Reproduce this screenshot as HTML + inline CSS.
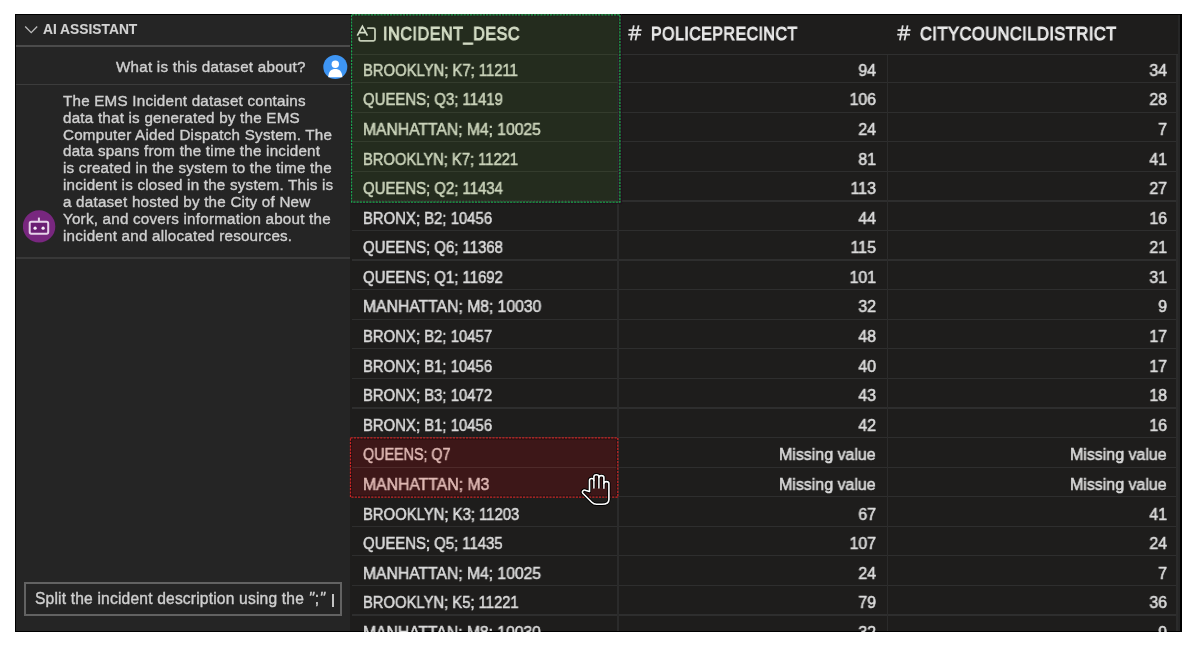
<!DOCTYPE html>
<html><head><meta charset="utf-8">
<style>
html,body{margin:0;padding:0;background:#ffffff;width:1200px;height:649px;overflow:hidden;position:relative;font-family:"Liberation Sans",sans-serif;}
.t{position:absolute;white-space:nowrap;line-height:20px;will-change:transform;-webkit-text-stroke:0.38px currentColor;}
.r{position:absolute;}
</style></head><body>
<div class="r" style="left:14.5px;top:14px;width:1167.5px;height:618px;background:#000;"></div>
<div class="r" style="left:350px;top:15px;width:830px;height:616px;background:#1e1d1c;overflow:hidden;"></div>
<div class="r" style="left:15.8px;top:15px;width:334.2px;height:616px;background:#252525;"></div>
<div class="r" style="left:15.8px;top:45px;width:334.2px;height:1.5px;background:#4b4b4b;"></div>
<div class="r" style="left:15.8px;top:83.8px;width:334.2px;height:1.5px;background:#3c3c3c;"></div>
<div class="r" style="left:15.8px;top:257.2px;width:334.2px;height:1.5px;background:#383838;"></div>
<svg class="r" style="left:24px;top:25px" width="15" height="10" viewBox="0 0 15 10"><path d="M1.2 1.5 L7.2 7.6 L13.2 1.5" fill="none" stroke="#bcbcbc" stroke-width="1.35"/></svg>
<div class="t" style="left:43.30px;top:19.72px;font-size:13.8px;color:#d2d2d2;font-weight:700;letter-spacing:0px;-webkit-text-stroke:0.1px currentColor;">AI ASSISTANT</div>
<div class="t" style="right:894.20px;top:57.33px;font-size:15.2px;color:#cfcfcf;font-weight:400;letter-spacing:0.24px;">What is this dataset about?</div>
<svg class="r" style="left:323px;top:55px" width="25" height="25" viewBox="0 0 25 25"><circle cx="12.3" cy="12" r="12" fill="#3e95f4"/><circle cx="12.3" cy="9.3" r="3.7" fill="#fff"/><path d="M5.2 22.3 C5.5 16 8.3 13.9 12.3 13.9 C16.3 13.9 19.1 16 19.4 22.3 Z" fill="#fff"/></svg>
<div class="t" style="left:63.30px;top:90.73px;font-size:15.2px;color:#cfcfcf;font-weight:400;letter-spacing:0.22px;">The EMS Incident dataset contains</div>
<div class="t" style="left:63.30px;top:107.63px;font-size:15.2px;color:#cfcfcf;font-weight:400;letter-spacing:0.22px;">data that is generated by the EMS</div>
<div class="t" style="left:63.30px;top:124.53px;font-size:15.2px;color:#cfcfcf;font-weight:400;letter-spacing:0.22px;">Computer Aided Dispatch System. The</div>
<div class="t" style="left:63.30px;top:141.43px;font-size:15.2px;color:#cfcfcf;font-weight:400;letter-spacing:0.22px;">data spans from the time the incident</div>
<div class="t" style="left:63.30px;top:158.33px;font-size:15.2px;color:#cfcfcf;font-weight:400;letter-spacing:0.22px;">is created in the system to the time the</div>
<div class="t" style="left:63.30px;top:175.23px;font-size:15.2px;color:#cfcfcf;font-weight:400;letter-spacing:0.22px;">incident is closed in the system. This is</div>
<div class="t" style="left:63.30px;top:192.13px;font-size:15.2px;color:#cfcfcf;font-weight:400;letter-spacing:0.22px;">a dataset hosted by the City of New</div>
<div class="t" style="left:63.30px;top:209.03px;font-size:15.2px;color:#cfcfcf;font-weight:400;letter-spacing:0.22px;">York, and covers information about the</div>
<div class="t" style="left:63.30px;top:225.93px;font-size:15.2px;color:#cfcfcf;font-weight:400;letter-spacing:0.22px;">incident and allocated resources.</div>
<svg class="r" style="left:23px;top:210px" width="33" height="33" viewBox="0 0 33 33"><circle cx="16.1" cy="16.4" r="16.2" fill="#78277f"/><rect x="6.7" y="11.85" width="18.5" height="11.85" rx="1.6" fill="#6a1f73" stroke="#e6d3ea" stroke-width="2"/><line x1="15.9" y1="7.6" x2="15.9" y2="11.85" stroke="#e6d3ea" stroke-width="2"/><circle cx="12.1" cy="18.2" r="1.6" fill="#f4ecf6"/><circle cx="20.1" cy="18.2" r="1.6" fill="#f4ecf6"/></svg>
<div class="r" style="left:24px;top:582px;width:314px;height:30px;border:2px solid #626262;background:#242424;"></div>
<div class="t" style="left:35.00px;top:589.19px;font-size:15.6px;color:#cfcfcf;font-weight:400;letter-spacing:0.18px;">Split the incident description using the <span style="font-style:italic;letter-spacing:0.6px">"</span><span style="letter-spacing:0.6px">;</span><span style="font-style:italic">"</span></div>
<div class="r" style="left:331.5px;top:594px;width:2px;height:12.5px;background:#c4c4c4;"></div>
<div class="r" style="left:0;top:0;width:1200px;height:632px;overflow:hidden">
<div class="r" style="left:352px;top:14px;width:268px;height:188px;background:#242c1e;"></div>
<div class="r" style="left:350px;top:437.5px;width:268px;height:59.80000000000001px;background:#3d1718;"></div>
<div class="r" style="left:1177.5px;top:15px;width:2.5px;height:616px;background:#262626;"></div>
<div class="r" style="left:352px;top:54.3px;width:826px;height:1.2px;background:#2f2f2f;"></div>
<div class="r" style="left:352px;top:82.00px;width:826px;height:1.2px;background:#2e2e2e;"></div>
<div class="r" style="left:352px;top:111.58px;width:826px;height:1.2px;background:#2e2e2e;"></div>
<div class="r" style="left:352px;top:141.16px;width:826px;height:1.2px;background:#2e2e2e;"></div>
<div class="r" style="left:352px;top:170.74px;width:826px;height:1.2px;background:#2e2e2e;"></div>
<div class="r" style="left:352px;top:200.32px;width:826px;height:1.2px;background:#2e2e2e;"></div>
<div class="r" style="left:352px;top:229.90px;width:826px;height:1.2px;background:#2e2e2e;"></div>
<div class="r" style="left:352px;top:259.48px;width:826px;height:1.2px;background:#2e2e2e;"></div>
<div class="r" style="left:352px;top:289.06px;width:826px;height:1.2px;background:#2e2e2e;"></div>
<div class="r" style="left:352px;top:318.64px;width:826px;height:1.2px;background:#2e2e2e;"></div>
<div class="r" style="left:352px;top:348.22px;width:826px;height:1.2px;background:#2e2e2e;"></div>
<div class="r" style="left:352px;top:377.80px;width:826px;height:1.2px;background:#2e2e2e;"></div>
<div class="r" style="left:352px;top:407.38px;width:826px;height:1.2px;background:#2e2e2e;"></div>
<div class="r" style="left:352px;top:436.96px;width:826px;height:1.2px;background:#2e2e2e;"></div>
<div class="r" style="left:352px;top:466.54px;width:826px;height:1.2px;background:#2e2e2e;"></div>
<div class="r" style="left:352px;top:496.12px;width:826px;height:1.2px;background:#2e2e2e;"></div>
<div class="r" style="left:352px;top:525.70px;width:826px;height:1.2px;background:#2e2e2e;"></div>
<div class="r" style="left:352px;top:555.28px;width:826px;height:1.2px;background:#2e2e2e;"></div>
<div class="r" style="left:352px;top:584.86px;width:826px;height:1.2px;background:#2e2e2e;"></div>
<div class="r" style="left:352px;top:614.44px;width:826px;height:1.2px;background:#2e2e2e;"></div>
<div class="r" style="left:617.40px;top:55px;width:1.2px;height:576px;background:#2b2b2b;"></div>
<div class="r" style="left:886.90px;top:55px;width:1.2px;height:576px;background:#2b2b2b;"></div>
<div class="r" style="left:1176.40px;top:55px;width:1.2px;height:576px;background:#2b2b2b;"></div>
<div class="r" style="left:352px;top:54.30px;width:267px;height:1.2px;background:#343c2d;"></div>
<div class="r" style="left:352px;top:82.00px;width:267px;height:1.2px;background:#343c2d;"></div>
<div class="r" style="left:352px;top:111.58px;width:267px;height:1.2px;background:#343c2d;"></div>
<div class="r" style="left:352px;top:141.16px;width:267px;height:1.2px;background:#343c2d;"></div>
<div class="r" style="left:352px;top:170.74px;width:267px;height:1.2px;background:#343c2d;"></div>
<div class="r" style="left:352px;top:200.32px;width:267px;height:1.2px;background:#343c2d;"></div>
<div class="r" style="left:351px;top:466.5px;width:266px;height:1.2px;background:#4e2a2a;"></div>
<svg class="r" style="left:355px;top:22px" width="24" height="22" viewBox="0 0 24 22"><path d="M2.3 13.7 L7.4 4.3 L12.4 13.7 M4.2 10.6 L10.6 10.6" fill="none" stroke="#d3dcc6" stroke-width="1.7"/><path d="M12.2 6.2 L18.5 6.2 Q20 6.2 20 7.7 L20 17.3 Q20 18.8 18.5 18.8 L5.7 18.8 Q4.2 18.8 4.2 17.3 L4.2 15.2" fill="none" stroke="#c4cdb6" stroke-width="1.8"/></svg>
<div class="t" style="left:383.20px;top:23.92px;font-size:19px;color:#d2dbc4;font-weight:400;letter-spacing:0.6px;transform:scaleX(0.8523);transform-origin:left center;-webkit-text-stroke:1.0px currentColor;">INCIDENT_DESC</div>
<svg class="r" style="left:624px;top:22px" width="22" height="22" viewBox="0 0 22 22"><path d="M9.8 3.4 L6.9 18.4 M14.6 3.4 L11.5 18.4 M4.6 8.1 L17.5 8.1 M4.2 12.7 L17 12.7" fill="none" stroke="#dedede" stroke-width="1.8"/></svg>
<div class="t" style="left:651.30px;top:23.92px;font-size:19px;color:#e8e8e8;font-weight:400;letter-spacing:0.6px;transform:scaleX(0.8369);transform-origin:left center;-webkit-text-stroke:1.0px currentColor;">POLICEPRECINCT</div>
<svg class="r" style="left:893px;top:22px" width="22" height="22" viewBox="0 0 22 22"><path d="M9.8 3.4 L6.9 18.4 M14.6 3.4 L11.5 18.4 M4.6 8.1 L17.5 8.1 M4.2 12.7 L17 12.7" fill="none" stroke="#dedede" stroke-width="1.8"/></svg>
<div class="t" style="left:919.60px;top:23.92px;font-size:19px;color:#e8e8e8;font-weight:400;letter-spacing:0.6px;transform:scaleX(0.8637);transform-origin:left center;-webkit-text-stroke:1.0px currentColor;">CITYCOUNCILDISTRICT</div>
<div class="t" style="left:362.50px;top:59.85px;font-size:16.3px;color:#cad3ba;font-weight:400;letter-spacing:0px;transform:scaleX(0.9103);transform-origin:left center;-webkit-text-stroke:0.55px currentColor;">BROOKLYN; K7; 11211</div>
<div class="t" style="right:324.00px;top:59.85px;font-size:16.3px;color:#dadada;font-weight:400;letter-spacing:0px;transform:scaleX(0.98);transform-origin:right center;-webkit-text-stroke:0.55px currentColor;">94</div>
<div class="t" style="right:33.00px;top:59.85px;font-size:16.3px;color:#dadada;font-weight:400;letter-spacing:0px;transform:scaleX(0.98);transform-origin:right center;-webkit-text-stroke:0.55px currentColor;">34</div>
<div class="t" style="left:362.50px;top:89.43px;font-size:16.3px;color:#cad3ba;font-weight:400;letter-spacing:0px;transform:scaleX(0.9167);transform-origin:left center;-webkit-text-stroke:0.55px currentColor;">QUEENS; Q3; 11419</div>
<div class="t" style="right:324.00px;top:89.43px;font-size:16.3px;color:#dadada;font-weight:400;letter-spacing:0px;transform:scaleX(0.98);transform-origin:right center;-webkit-text-stroke:0.55px currentColor;">106</div>
<div class="t" style="right:33.00px;top:89.43px;font-size:16.3px;color:#dadada;font-weight:400;letter-spacing:0px;transform:scaleX(0.98);transform-origin:right center;-webkit-text-stroke:0.55px currentColor;">28</div>
<div class="t" style="left:362.50px;top:119.01px;font-size:16.3px;color:#cad3ba;font-weight:400;letter-spacing:0px;transform:scaleX(0.9621);transform-origin:left center;-webkit-text-stroke:0.55px currentColor;">MANHATTAN; M4; 10025</div>
<div class="t" style="right:324.00px;top:119.01px;font-size:16.3px;color:#dadada;font-weight:400;letter-spacing:0px;transform:scaleX(0.98);transform-origin:right center;-webkit-text-stroke:0.55px currentColor;">24</div>
<div class="t" style="right:33.00px;top:119.01px;font-size:16.3px;color:#dadada;font-weight:400;letter-spacing:0px;transform:scaleX(0.98);transform-origin:right center;-webkit-text-stroke:0.55px currentColor;">7</div>
<div class="t" style="left:362.50px;top:148.59px;font-size:16.3px;color:#cad3ba;font-weight:400;letter-spacing:0px;transform:scaleX(0.905);transform-origin:left center;-webkit-text-stroke:0.55px currentColor;">BROOKLYN; K7; 11221</div>
<div class="t" style="right:324.00px;top:148.59px;font-size:16.3px;color:#dadada;font-weight:400;letter-spacing:0px;transform:scaleX(0.98);transform-origin:right center;-webkit-text-stroke:0.55px currentColor;">81</div>
<div class="t" style="right:33.00px;top:148.59px;font-size:16.3px;color:#dadada;font-weight:400;letter-spacing:0px;transform:scaleX(0.98);transform-origin:right center;-webkit-text-stroke:0.55px currentColor;">41</div>
<div class="t" style="left:362.50px;top:178.17px;font-size:16.3px;color:#cad3ba;font-weight:400;letter-spacing:0px;transform:scaleX(0.9167);transform-origin:left center;-webkit-text-stroke:0.55px currentColor;">QUEENS; Q2; 11434</div>
<div class="t" style="right:324.00px;top:178.17px;font-size:16.3px;color:#dadada;font-weight:400;letter-spacing:0px;transform:scaleX(0.98);transform-origin:right center;-webkit-text-stroke:0.55px currentColor;">113</div>
<div class="t" style="right:33.00px;top:178.17px;font-size:16.3px;color:#dadada;font-weight:400;letter-spacing:0px;transform:scaleX(0.98);transform-origin:right center;-webkit-text-stroke:0.55px currentColor;">27</div>
<div class="t" style="left:362.50px;top:207.75px;font-size:16.3px;color:#dadada;font-weight:400;letter-spacing:0px;transform:scaleX(0.9138);transform-origin:left center;-webkit-text-stroke:0.55px currentColor;">BRONX; B2; 10456</div>
<div class="t" style="right:324.00px;top:207.75px;font-size:16.3px;color:#dadada;font-weight:400;letter-spacing:0px;transform:scaleX(0.98);transform-origin:right center;-webkit-text-stroke:0.55px currentColor;">44</div>
<div class="t" style="right:33.00px;top:207.75px;font-size:16.3px;color:#dadada;font-weight:400;letter-spacing:0px;transform:scaleX(0.98);transform-origin:right center;-webkit-text-stroke:0.55px currentColor;">16</div>
<div class="t" style="left:362.50px;top:237.33px;font-size:16.3px;color:#dadada;font-weight:400;letter-spacing:0px;transform:scaleX(0.9167);transform-origin:left center;-webkit-text-stroke:0.55px currentColor;">QUEENS; Q6; 11368</div>
<div class="t" style="right:324.00px;top:237.33px;font-size:16.3px;color:#dadada;font-weight:400;letter-spacing:0px;transform:scaleX(0.98);transform-origin:right center;-webkit-text-stroke:0.55px currentColor;">115</div>
<div class="t" style="right:33.00px;top:237.33px;font-size:16.3px;color:#dadada;font-weight:400;letter-spacing:0px;transform:scaleX(0.98);transform-origin:right center;-webkit-text-stroke:0.55px currentColor;">21</div>
<div class="t" style="left:362.50px;top:266.91px;font-size:16.3px;color:#dadada;font-weight:400;letter-spacing:0px;transform:scaleX(0.9167);transform-origin:left center;-webkit-text-stroke:0.55px currentColor;">QUEENS; Q1; 11692</div>
<div class="t" style="right:324.00px;top:266.91px;font-size:16.3px;color:#dadada;font-weight:400;letter-spacing:0px;transform:scaleX(0.98);transform-origin:right center;-webkit-text-stroke:0.55px currentColor;">101</div>
<div class="t" style="right:33.00px;top:266.91px;font-size:16.3px;color:#dadada;font-weight:400;letter-spacing:0px;transform:scaleX(0.98);transform-origin:right center;-webkit-text-stroke:0.55px currentColor;">31</div>
<div class="t" style="left:362.50px;top:296.49px;font-size:16.3px;color:#dadada;font-weight:400;letter-spacing:0px;transform:scaleX(0.9648);transform-origin:left center;-webkit-text-stroke:0.55px currentColor;">MANHATTAN; M8; 10030</div>
<div class="t" style="right:324.00px;top:296.49px;font-size:16.3px;color:#dadada;font-weight:400;letter-spacing:0px;transform:scaleX(0.98);transform-origin:right center;-webkit-text-stroke:0.55px currentColor;">32</div>
<div class="t" style="right:33.00px;top:296.49px;font-size:16.3px;color:#dadada;font-weight:400;letter-spacing:0px;transform:scaleX(0.98);transform-origin:right center;-webkit-text-stroke:0.55px currentColor;">9</div>
<div class="t" style="left:362.50px;top:326.07px;font-size:16.3px;color:#dadada;font-weight:400;letter-spacing:0px;transform:scaleX(0.9138);transform-origin:left center;-webkit-text-stroke:0.55px currentColor;">BRONX; B2; 10457</div>
<div class="t" style="right:324.00px;top:326.07px;font-size:16.3px;color:#dadada;font-weight:400;letter-spacing:0px;transform:scaleX(0.98);transform-origin:right center;-webkit-text-stroke:0.55px currentColor;">48</div>
<div class="t" style="right:33.00px;top:326.07px;font-size:16.3px;color:#dadada;font-weight:400;letter-spacing:0px;transform:scaleX(0.98);transform-origin:right center;-webkit-text-stroke:0.55px currentColor;">17</div>
<div class="t" style="left:362.50px;top:355.65px;font-size:16.3px;color:#dadada;font-weight:400;letter-spacing:0px;transform:scaleX(0.9138);transform-origin:left center;-webkit-text-stroke:0.55px currentColor;">BRONX; B1; 10456</div>
<div class="t" style="right:324.00px;top:355.65px;font-size:16.3px;color:#dadada;font-weight:400;letter-spacing:0px;transform:scaleX(0.98);transform-origin:right center;-webkit-text-stroke:0.55px currentColor;">40</div>
<div class="t" style="right:33.00px;top:355.65px;font-size:16.3px;color:#dadada;font-weight:400;letter-spacing:0px;transform:scaleX(0.98);transform-origin:right center;-webkit-text-stroke:0.55px currentColor;">17</div>
<div class="t" style="left:362.50px;top:385.23px;font-size:16.3px;color:#dadada;font-weight:400;letter-spacing:0px;transform:scaleX(0.9138);transform-origin:left center;-webkit-text-stroke:0.55px currentColor;">BRONX; B3; 10472</div>
<div class="t" style="right:324.00px;top:385.23px;font-size:16.3px;color:#dadada;font-weight:400;letter-spacing:0px;transform:scaleX(0.98);transform-origin:right center;-webkit-text-stroke:0.55px currentColor;">43</div>
<div class="t" style="right:33.00px;top:385.23px;font-size:16.3px;color:#dadada;font-weight:400;letter-spacing:0px;transform:scaleX(0.98);transform-origin:right center;-webkit-text-stroke:0.55px currentColor;">18</div>
<div class="t" style="left:362.50px;top:414.81px;font-size:16.3px;color:#dadada;font-weight:400;letter-spacing:0px;transform:scaleX(0.9138);transform-origin:left center;-webkit-text-stroke:0.55px currentColor;">BRONX; B1; 10456</div>
<div class="t" style="right:324.00px;top:414.81px;font-size:16.3px;color:#dadada;font-weight:400;letter-spacing:0px;transform:scaleX(0.98);transform-origin:right center;-webkit-text-stroke:0.55px currentColor;">42</div>
<div class="t" style="right:33.00px;top:414.81px;font-size:16.3px;color:#dadada;font-weight:400;letter-spacing:0px;transform:scaleX(0.98);transform-origin:right center;-webkit-text-stroke:0.55px currentColor;">16</div>
<div class="t" style="left:362.50px;top:444.39px;font-size:16.3px;color:#dfb9b4;font-weight:400;letter-spacing:0px;transform:scaleX(0.8794);transform-origin:left center;-webkit-text-stroke:0.55px currentColor;">QUEENS; Q7</div>
<div class="t" style="right:324.00px;top:444.39px;font-size:16.3px;color:#dadada;font-weight:400;letter-spacing:0px;transform:scaleX(0.98);transform-origin:right center;-webkit-text-stroke:0.55px currentColor;">Missing value</div>
<div class="t" style="right:33.00px;top:444.39px;font-size:16.3px;color:#dadada;font-weight:400;letter-spacing:0px;transform:scaleX(0.98);transform-origin:right center;-webkit-text-stroke:0.55px currentColor;">Missing value</div>
<div class="t" style="left:362.50px;top:473.97px;font-size:16.3px;color:#dfb9b4;font-weight:400;letter-spacing:0px;transform:scaleX(0.9674);transform-origin:left center;-webkit-text-stroke:0.55px currentColor;">MANHATTAN; M3</div>
<div class="t" style="right:324.00px;top:473.97px;font-size:16.3px;color:#dadada;font-weight:400;letter-spacing:0px;transform:scaleX(0.98);transform-origin:right center;-webkit-text-stroke:0.55px currentColor;">Missing value</div>
<div class="t" style="right:33.00px;top:473.97px;font-size:16.3px;color:#dadada;font-weight:400;letter-spacing:0px;transform:scaleX(0.98);transform-origin:right center;-webkit-text-stroke:0.55px currentColor;">Missing value</div>
<div class="t" style="left:362.50px;top:503.55px;font-size:16.3px;color:#dadada;font-weight:400;letter-spacing:0px;transform:scaleX(0.912);transform-origin:left center;-webkit-text-stroke:0.55px currentColor;">BROOKLYN; K3; 11203</div>
<div class="t" style="right:324.00px;top:503.55px;font-size:16.3px;color:#dadada;font-weight:400;letter-spacing:0px;transform:scaleX(0.98);transform-origin:right center;-webkit-text-stroke:0.55px currentColor;">67</div>
<div class="t" style="right:33.00px;top:503.55px;font-size:16.3px;color:#dadada;font-weight:400;letter-spacing:0px;transform:scaleX(0.98);transform-origin:right center;-webkit-text-stroke:0.55px currentColor;">41</div>
<div class="t" style="left:362.50px;top:533.13px;font-size:16.3px;color:#dadada;font-weight:400;letter-spacing:0px;transform:scaleX(0.9148);transform-origin:left center;-webkit-text-stroke:0.55px currentColor;">QUEENS; Q5; 11435</div>
<div class="t" style="right:324.00px;top:533.13px;font-size:16.3px;color:#dadada;font-weight:400;letter-spacing:0px;transform:scaleX(0.98);transform-origin:right center;-webkit-text-stroke:0.55px currentColor;">107</div>
<div class="t" style="right:33.00px;top:533.13px;font-size:16.3px;color:#dadada;font-weight:400;letter-spacing:0px;transform:scaleX(0.98);transform-origin:right center;-webkit-text-stroke:0.55px currentColor;">24</div>
<div class="t" style="left:362.50px;top:562.71px;font-size:16.3px;color:#dadada;font-weight:400;letter-spacing:0px;transform:scaleX(0.9631);transform-origin:left center;-webkit-text-stroke:0.55px currentColor;">MANHATTAN; M4; 10025</div>
<div class="t" style="right:324.00px;top:562.71px;font-size:16.3px;color:#dadada;font-weight:400;letter-spacing:0px;transform:scaleX(0.98);transform-origin:right center;-webkit-text-stroke:0.55px currentColor;">24</div>
<div class="t" style="right:33.00px;top:562.71px;font-size:16.3px;color:#dadada;font-weight:400;letter-spacing:0px;transform:scaleX(0.98);transform-origin:right center;-webkit-text-stroke:0.55px currentColor;">7</div>
<div class="t" style="left:362.50px;top:592.29px;font-size:16.3px;color:#dadada;font-weight:400;letter-spacing:0px;transform:scaleX(0.9085);transform-origin:left center;-webkit-text-stroke:0.55px currentColor;">BROOKLYN; K5; 11221</div>
<div class="t" style="right:324.00px;top:592.29px;font-size:16.3px;color:#dadada;font-weight:400;letter-spacing:0px;transform:scaleX(0.98);transform-origin:right center;-webkit-text-stroke:0.55px currentColor;">79</div>
<div class="t" style="right:33.00px;top:592.29px;font-size:16.3px;color:#dadada;font-weight:400;letter-spacing:0px;transform:scaleX(0.98);transform-origin:right center;-webkit-text-stroke:0.55px currentColor;">36</div>
<div class="t" style="left:362.50px;top:621.87px;font-size:16.3px;color:#dadada;font-weight:400;letter-spacing:0px;transform:scaleX(0.9621);transform-origin:left center;-webkit-text-stroke:0.55px currentColor;">MANHATTAN; M8; 10030</div>
<div class="t" style="right:324.00px;top:621.87px;font-size:16.3px;color:#dadada;font-weight:400;letter-spacing:0px;transform:scaleX(0.98);transform-origin:right center;-webkit-text-stroke:0.55px currentColor;">32</div>
<div class="t" style="right:33.00px;top:621.87px;font-size:16.3px;color:#dadada;font-weight:400;letter-spacing:0px;transform:scaleX(0.98);transform-origin:right center;-webkit-text-stroke:0.55px currentColor;">9</div>
</div>
<svg class="r" style="left:0;top:0" width="1200" height="649" viewBox="0 0 1200 649"><rect x="352.3" y="15.8" width="266.4" height="185.2" fill="none" stroke="#2a1224" stroke-width="1" stroke-dasharray="2 1.1"/><path d="M621.6 14 L621.6 203.6 L351 203.6" fill="none" stroke="#24101e" stroke-width="1"/><rect x="351.6" y="14.8" width="268.3" height="187.3" fill="none" stroke="#1ba34c" stroke-width="1.25" stroke-dasharray="2.2 1"/><rect x="351.2" y="438.8" width="265.8" height="57.4" fill="none" stroke="#160d10" stroke-width="1"/><rect x="350.5" y="437.9" width="267.3" height="59.2" fill="none" stroke="#cc2424" stroke-width="1.25" stroke-dasharray="2.2 1.1"/></svg>
<svg class="r" style="left:580px;top:472px" width="36" height="40" viewBox="0 0 36 40"><path d="M9.5 19.5 L9.5 8.5 C9.5 5.8 13.9 5.8 13.9 8.5 L13.9 4.8 C13.9 2.0 18.9 2.0 18.9 4.8 L18.9 5.6 C18.9 2.9 23.9 2.9 23.9 5.6 L23.9 11.5 C23.9 9 28.9 9 28.9 11.5 L28.9 27.5 C28.9 30.5 26 32.3 22 32.3 L16.5 32.3 C14.5 32.3 13 31.5 11.8 30.3 L2.8 21.3 C1.5 19.8 3.5 17 6 18.5 Z" fill="none" stroke="#000" stroke-width="3.4" stroke-linejoin="round"/><path d="M13.9 8.5 L13.9 16 M18.9 5.6 L18.9 16 M23.9 11.5 L23.9 16.3" fill="none" stroke="#000" stroke-width="3.2"/><path d="M9.5 19.5 L9.5 8.5 C9.5 5.8 13.9 5.8 13.9 8.5 L13.9 4.8 C13.9 2.0 18.9 2.0 18.9 4.8 L18.9 5.6 C18.9 2.9 23.9 2.9 23.9 5.6 L23.9 11.5 C23.9 9 28.9 9 28.9 11.5 L28.9 27.5 C28.9 30.5 26 32.3 22 32.3 L16.5 32.3 C14.5 32.3 13 31.5 11.8 30.3 L2.8 21.3 C1.5 19.8 3.5 17 6 18.5 Z" fill="none" stroke="#fff" stroke-width="1.6" stroke-linejoin="round"/><path d="M13.9 8.5 L13.9 16 M18.9 5.6 L18.9 16 M23.9 11.5 L23.9 16.3" fill="none" stroke="#fff" stroke-width="1.5" stroke-linecap="round"/></svg>
</body></html>
